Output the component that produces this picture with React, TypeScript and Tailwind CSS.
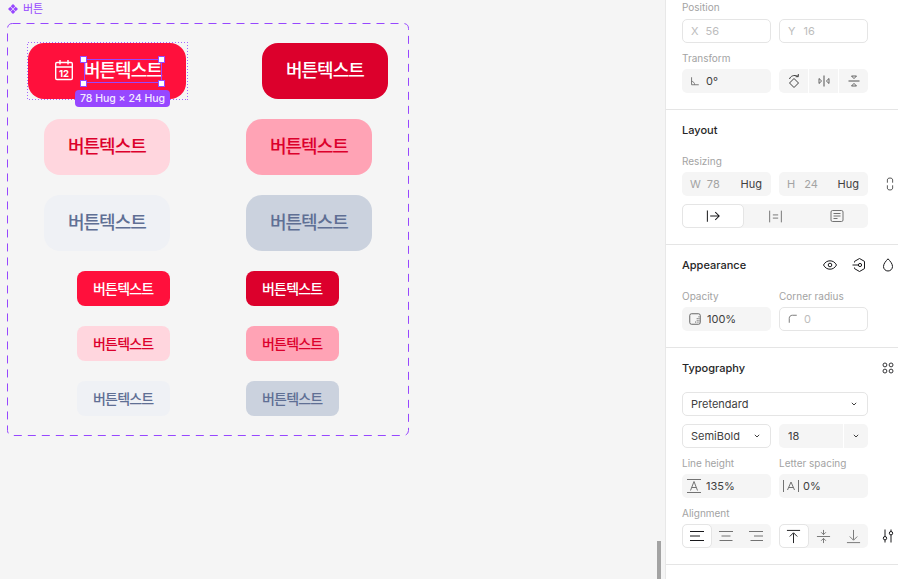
import type { ReactNode } from "react";

const sans = "font-['Inter','Noto_Sans_CJK_KR',sans-serif]";

type Variant = { bg: string; text: string };

const variants: { left: Variant; right: Variant }[] = [
  { left: { bg: "bg-[#ff103c]", text: "text-white" }, right: { bg: "bg-[#dc002c]", text: "text-white" } },
  { left: { bg: "bg-[#ffd6de]", text: "text-[#dc002c]" }, right: { bg: "bg-[#ffa3b5]", text: "text-[#dc002c]" } },
  { left: { bg: "bg-[#eff1f5]", text: "text-[#5f6f94]" }, right: { bg: "bg-[#cbd2de]", text: "text-[#5f6f94]" } },
];

function Icon({ children, size = 16, className = "" }: { children: ReactNode; size?: number; className?: string }) {
  return (
    <svg width={size} height={size} viewBox="0 0 16 16" fill="none" stroke="currentColor" strokeWidth="1" className={`shrink-0 ${className}`}>
      {children}
    </svg>
  );
}

function CalendarIcon() {
  return (
    <svg width="24" height="24" viewBox="0 0 24 24" fill="none" stroke="white" strokeWidth="1.4" className="shrink-0">
      <rect x="3.7" y="3.5" width="16.6" height="17" rx="1.2" />
      <path d="M3.7 8H20.3M8 1V5.5M16 1V5.5" />
      <text x="12" y="18.2" textAnchor="middle" fontSize="9.5" fontWeight="700" fill="white" stroke="none" fontFamily="Inter, sans-serif">
        12
      </text>
    </svg>
  );
}

function BigButton({ v, icon }: { v: Variant; icon?: boolean }) {
  return (
    <div className={`flex h-14 items-center gap-2 rounded-2xl px-6 ${v.bg} ${v.text}`}>
      {icon && <CalendarIcon />}
      <span className="w-[78px] text-[18px] leading-6 font-[540] tracking-[-1px] whitespace-nowrap">버튼텍스트</span>
    </div>
  );
}

function SmallButton({ v }: { v: Variant }) {
  return (
    <div className={`flex h-[35px] items-center rounded-lg px-4 ${v.bg} ${v.text}`}>
      <span className="w-[61px] text-[14px] leading-5 font-[540] tracking-[-0.8px] whitespace-nowrap">버튼텍스트</span>
    </div>
  );
}

function Handle({ className }: { className: string }) {
  return <div className={`absolute h-[7px] w-[7px] border border-[#9747ff] bg-white ${className}`} />;
}

function Canvas() {
  return (
    <div className="relative w-[665px] shrink-0 bg-[#f5f5f5] pt-[23px] pl-[7px]">
      <div className="absolute top-[2px] left-2 flex items-center gap-[5px] text-[#9747ff]">
        <svg width="10" height="10" viewBox="0 0 10 10" fill="currentColor">
          <path d="M5 0L7.3 2.3L5 4.6L2.7 2.3ZM2.3 2.7L4.6 5L2.3 7.3L0 5ZM7.7 2.7L10 5L7.7 7.3L5.4 5ZM5 5.4L7.3 7.7L5 10L2.7 7.7Z" />
        </svg>
        <span className="text-[11px] leading-[14px]">버튼</span>
      </div>

      <div className="relative flex w-[402px] flex-col items-center gap-5 py-5">
        <svg width="402" height="413" className="absolute top-0 left-0" fill="none">
          <rect x="0.5" y="0.5" width="401" height="412" rx="5" stroke="#9747ff" strokeDasharray="8 6" />
        </svg>
        {variants.map((row, i) => (
          <div key={i} className="flex gap-[76px]">
            <BigButton v={row.left} icon={i === 0} />
            <BigButton v={row.right} />
          </div>
        ))}
        {variants.map((row, i) => (
          <div key={i} className="flex gap-[76px]">
            <SmallButton v={row.left} />
            <SmallButton v={row.right} />
          </div>
        ))}

        {/* selection on first button */}
        <svg width="161" height="58" className="absolute top-[19px] left-5" fill="none" shapeRendering="crispEdges">
          <rect x="0.5" y="0.5" width="160" height="57" stroke="#a566ff" strokeDasharray="1 2" />
        </svg>
        <div className="absolute top-[36px] left-[77px] h-6 w-[78px] border border-[#9747ff]" />
        <Handle className="top-[33px] left-[73px]" />
        <Handle className="top-[33px] left-[151px]" />
        <Handle className="top-[57px] left-[73px]" />
        <Handle className="top-[57px] left-[151px]" />
        <div className="absolute top-[67px] left-[68px] flex h-[17px] w-[95px] items-center justify-center rounded-sm bg-[#9747ff] text-[10.5px] font-medium whitespace-nowrap text-[#f3ebff]">
          78 Hug × 24 Hug
        </div>
      </div>

      <div className="absolute top-[541px] left-[657px] h-[38px] w-1 bg-[#a3a3a3]" />
    </div>
  );
}

function Label({ children }: { children: ReactNode }) {
  return <div className="text-[10px] leading-[14px] text-[#a3a3a3]">{children}</div>;
}

function Field({ children, outlined, className = "" }: { children: ReactNode; outlined?: boolean; className?: string }) {
  return (
    <div
      className={`flex h-6 items-center rounded-[5px] text-[11px] ${
        outlined ? "border border-[#e5e5e5] bg-white" : "bg-[#f5f5f5]"
      } ${className}`}
    >
      {children}
    </div>
  );
}

function Section({ children, className = "" }: { children: ReactNode; className?: string }) {
  return <div className={`border-b border-[#e5e5e5] pl-4 ${className}`}>{children}</div>;
}

function Title({ children }: { children: ReactNode }) {
  return <div className="text-[11px] leading-4 font-medium text-[#262626]">{children}</div>;
}

const Chevron = ({ className = "" }: { className?: string }) => (
  <svg width="6" height="4" viewBox="0 0 6 4" fill="none" stroke="#404040" strokeWidth="1" className={className}>
    <path d="M0.8 0.8L3 3L5.2 0.8" />
  </svg>
);

function SegCell({ active, children }: { active?: boolean; children: ReactNode }) {
  return (
    <div
      className={`flex h-6 items-center justify-center rounded-[5px] ${
        active ? "border border-[#e5e5e5] bg-white text-[#18181b]" : "text-[#737373]"
      }`}
    >
      {children}
    </div>
  );
}

function Panel() {
  return (
    <div className={`h-[579px] w-[233px] shrink-0 border-l border-[#e8e8e8] bg-white text-[#404040] ${sans}`}>
      <Section className="h-[110px]">
        <Label>Position</Label>
        <div className="mt-[5px] grid w-[186px] grid-cols-[89px_89px] gap-2">
          <Field outlined className="gap-[7px] pl-2 text-[#bdbdbd]">
            <span>X</span>
            <span>56</span>
          </Field>
          <Field outlined className="gap-[8px] pl-2 text-[#bdbdbd]">
            <span>Y</span>
            <span>16</span>
          </Field>
        </div>
        <div className="mt-2">
          <Label>Transform</Label>
        </div>
        <div className="mt-1 grid w-[186px] grid-cols-[89px_89px] gap-2">
          <Field className="gap-[6px] pl-2">
            <Icon size={10} className="text-[#737373]">
              <path d="M2.5 2V14H14M2.5 8.5C5 8.5 7.5 11 7.5 14" strokeWidth="1.5" />
            </Icon>
            <span>0°</span>
          </Field>
          <div className="grid h-6 grid-cols-3 gap-px">
            <div className="flex items-center justify-center rounded-l-[5px] bg-[#f5f5f5]">
              <Icon size={16}>
                <path d="M8 5.5L12.5 10L8 14.5L3.5 10Z" />
                <path d="M3.5 6C4.5 3 8 1.5 12 3.2M12.3 1V3.7H9.6" />
              </Icon>
            </div>
            <div className="flex items-center justify-center bg-[#f5f5f5]">
              <Icon size={16}>
                <path d="M8 2.5V13.5" strokeWidth="0.9" />
                <path d="M3 5.5V10.5L5.6 8ZM13 5.5V10.5L10.4 8Z" strokeWidth="0.8" />
              </Icon>
            </div>
            <div className="flex items-center justify-center rounded-r-[5px] bg-[#f5f5f5]">
              <Icon size={16}>
                <path d="M2.5 8H13.5" strokeWidth="0.9" />
                <path d="M5.5 3H10.5L8 5.6ZM5.5 13H10.5L8 10.4Z" strokeWidth="0.8" />
              </Icon>
            </div>
          </div>
        </div>
      </Section>

      <Section className="h-[135px] pt-3">
        <Title>Layout</Title>
        <div className="mt-[16px]">
          <Label>Resizing</Label>
        </div>
        <div className="mt-1 flex items-center">
          <div className="grid w-[186px] grid-cols-[89px_89px] gap-2">
            <Field className="justify-between pr-[9px] pl-2">
              <span className="flex gap-[6px] text-[#a3a3a3]">
                <span>W</span>
                <span>78</span>
              </span>
              <span>Hug</span>
            </Field>
            <Field className="justify-between pr-[9px] pl-2">
              <span className="flex gap-[9px] text-[#a3a3a3]">
                <span>H</span>
                <span>24</span>
              </span>
              <span>Hug</span>
            </Field>
          </div>
          <div className="ml-[15px]">
            <Icon size={14}>
              <path d="M5 6.5V3.5C5 1.8 6.2 1.2 8 1.2S11 1.8 11 3.5V6.5M5 9.5V12.5C5 14.2 6.2 14.8 8 14.8S11 14.2 11 12.5V9.5" />
            </Icon>
          </div>
        </div>
        <div className="mt-2 grid w-[186px] grid-cols-3 rounded-[5px] bg-[#f5f5f5]">
          <SegCell active>
            <Icon size={18}>
              <path d="M3 3V13M5.5 8H13.5M10 4.5L13.5 8L10 11.5" strokeWidth="0.9" />
            </Icon>
          </SegCell>
          <SegCell>
            <Icon size={17}>
              <path d="M2.5 2.5V13.5M13.5 2.5V13.5M5.5 6.5H10.5M5.5 9.5H10.5" strokeWidth="0.9" />
            </Icon>
          </SegCell>
          <SegCell>
            <Icon size={16}>
              <rect x="2" y="2.5" width="12" height="11" rx="1.5" />
              <path d="M4.5 5.5H11.5M4.5 8H11.5M4.5 10.5H8.5" />
            </Icon>
          </SegCell>
        </div>
      </Section>

      <Section className="h-[103px] pt-3">
        <div className="flex items-center">
          <Title>Appearance</Title>
          <div className="mr-[2px] ml-auto flex gap-[13px] text-[#18181b]">
            <Icon>
              <path d="M1.5 8C3 5.2 5.3 3.8 8 3.8S13 5.2 14.5 8C13 10.8 10.7 12.2 8 12.2S3 10.8 1.5 8Z" />
              <circle cx="8" cy="8" r="1.8" />
            </Icon>
            <Icon>
              <path d="M3.5 5.5V4.4L8.5 1.5L13.5 4.4V11.6L8.5 14.5L3.5 11.6V10.5" />
              <circle cx="9" cy="8" r="1.6" />
              <path d="M1.5 8H7.4" />
            </Icon>
            <Icon>
              <path d="M8 1.8C10 4 12.5 6.6 12.5 9.5A4.5 4.5 0 0 1 3.5 9.5C3.5 6.6 6 4 8 1.8Z" />
            </Icon>
          </div>
        </div>
        <div className="mt-[16px] grid w-[186px] grid-cols-[89px_89px] gap-2 leading-none">
          <Label>Opacity</Label>
          <Label>Corner radius</Label>
        </div>
        <div className="mt-1 grid w-[186px] grid-cols-[89px_89px] gap-2">
          <Field className="gap-[5px] pl-[6px]">
            <Icon size={14} className="text-[#525252]">
              <rect x="2" y="2" width="12" height="12" rx="2" />
              <path d="M8 11.5H9M10 11.5H11M12 11.5H13M10 9.5H11M12 9.5H13M10 7.5H11M12 7.5H13M12 5.5H13" strokeWidth="1.1" />
            </Icon>
            <span>100%</span>
          </Field>
          <Field outlined className="gap-[6px] pl-2 text-[#bdbdbd]">
            <Icon size={10} className="text-[#737373]">
              <path d="M2 14V7C2 4 4 2 7 2H14" strokeWidth="1.5" />
            </Icon>
            <span>0</span>
          </Field>
        </div>
      </Section>

      <Section className="h-[217px] pt-3">
        <div className="flex items-center">
          <Title>Typography</Title>
          <div className="mr-[3px] ml-auto text-[#18181b]">
            <Icon size={14}>
              <circle cx="4.5" cy="4.5" r="2.2" />
              <circle cx="11.5" cy="4.5" r="2.2" />
              <circle cx="4.5" cy="11.5" r="2.2" />
              <circle cx="11.5" cy="11.5" r="2.2" />
            </Icon>
          </div>
        </div>
        <Field outlined className="mt-[16px] w-[186px] justify-between pr-[10px] pl-2">
          <span>Pretendard</span>
          <Chevron />
        </Field>
        <div className="mt-2 grid w-[186px] grid-cols-[89px_89px] gap-2">
          <Field outlined className="justify-between pr-[10px] pl-[8px]">
            <span>SemiBold</span>
            <Chevron />
          </Field>
          <div className="flex h-6 gap-px text-[11px]">
            <div className="flex flex-1 items-center rounded-l-[5px] bg-[#f5f5f5] pl-[9px]">18</div>
            <div className="flex w-6 items-center justify-center rounded-r-[5px] bg-[#f5f5f5]">
              <Chevron />
            </div>
          </div>
        </div>
        <div className="mt-2 grid w-[186px] grid-cols-[89px_89px] gap-2">
          <Label>Line height</Label>
          <Label>Letter spacing</Label>
        </div>
        <div className="mt-1 grid w-[186px] grid-cols-[89px_89px] gap-2">
          <Field className="gap-[5px] pl-[5px]">
            <svg width="14" height="14" viewBox="0 0 14 14" fill="none" stroke="#737373" strokeWidth="1" className="shrink-0">
              <path d="M0 0.5H14M0 13.5H14M3.5 11.5L7 2.5L10.5 11.5M4.7 8.5H9.3" />
            </svg>
            <span>135%</span>
          </Field>
          <Field className="gap-[4px] pl-1">
            <svg width="16" height="14" viewBox="0 0 16 14" fill="none" stroke="#737373" strokeWidth="1" className="shrink-0">
              <path d="M0.5 1V13M15.5 1V13M4.5 11L8 3L11.5 11M5.7 8.5H10.3" />
            </svg>
            <span>0%</span>
          </Field>
        </div>
        <div className="mt-2">
          <Label>Alignment</Label>
        </div>
        <div className="mt-1 flex items-center">
          <div className="grid w-[186px] grid-cols-[89px_89px] gap-2">
            <div className="grid grid-cols-3 rounded-[5px] bg-[#f5f5f5]">
              <SegCell active>
                <Icon size={16}>
                  <path d="M1 3.5H15M1 8H11M1 12.5H15" />
                </Icon>
              </SegCell>
              <SegCell>
                <Icon size={16}>
                  <path d="M1 3.5H15M3.5 8H12.5M1.5 12.5H14.5" />
                </Icon>
              </SegCell>
              <SegCell>
                <Icon size={16}>
                  <path d="M1 3.5H15M6 8H15M2.5 12.5H15" />
                </Icon>
              </SegCell>
            </div>
            <div className="grid grid-cols-3 rounded-[5px] bg-[#f5f5f5]">
              <SegCell active>
                <Icon size={15}>
                  <path d="M1 1.5H15M8 15V4.5M4 8L8 4L12 8" />
                </Icon>
              </SegCell>
              <SegCell>
                <Icon size={15}>
                  <path d="M1 8H15M8 1V6M8 10V15M5.5 3.5L8 6L10.5 3.5M5.5 12.5L8 10L10.5 12.5" />
                </Icon>
              </SegCell>
              <SegCell>
                <Icon size={15}>
                  <path d="M1 14.5H15M8 1V11.5M4 8L8 12L12 8" />
                </Icon>
              </SegCell>
            </div>
          </div>
          <div className="ml-3 text-[#18181b]">
            <Icon size={16}>
              <path d="M5 1.5V8.5M5 12V14.5M11 1.5V3.5M11 7V14.5" />
              <circle cx="5" cy="10.2" r="1.7" />
              <circle cx="11" cy="5.2" r="1.7" />
            </Icon>
          </div>
        </div>
      </Section>
    </div>
  );
}

export default function App() {
  return (
    <div className={`flex h-[579px] w-[898px] overflow-hidden bg-white ${sans}`}>
      <Canvas />
      <Panel />
    </div>
  );
}
